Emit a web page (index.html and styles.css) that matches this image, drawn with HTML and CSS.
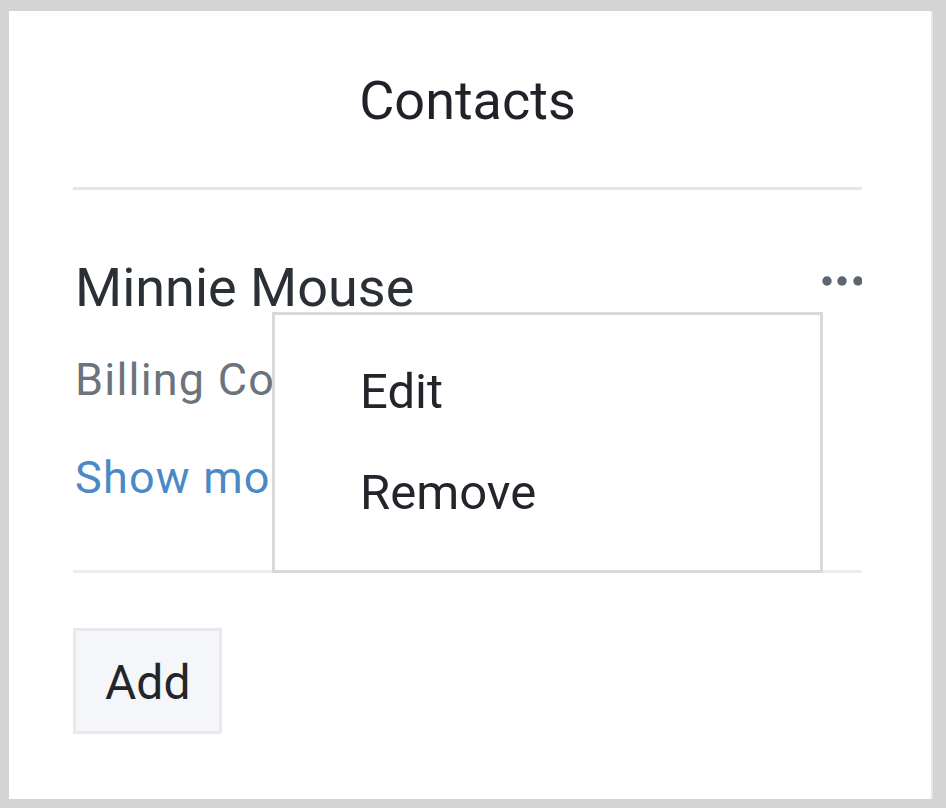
FILE: index.html
```html
<!DOCTYPE html>
<html lang="en">
<head>
<meta charset="utf-8">
<title>Contacts</title>
<link rel="stylesheet" href="styles.css">
</head>
<body>
<div class="frame">
  <div class="panel">
    <h1 class="title">Contacts</h1>
    <div class="list">
      <div class="contact">
        <div class="contact-head">
          <span class="name">Minnie Mouse</span>
          <button class="overflow" aria-label="More options">
            <svg width="41" height="10" viewBox="0 0 41 10"><circle cx="6" cy="5" r="4.7"/><circle cx="21" cy="5" r="4.7"/><circle cx="37" cy="5" r="4.7"/></svg>
          </button>
        </div>
        <div class="role">Billing Contact</div>
        <a class="more" href="#">Show more</a>
        <ul class="menu">
          <li class="menu-item">Edit</li>
          <li class="menu-item">Remove</li>
        </ul>
      </div>
    </div>
    <button class="add">Add</button>
  </div>
</div>
</body>
</html>
```
FILE: styles.css
```css
html, body {
  margin: 0;
  padding: 0;
}
body {
  background: #d4d4d4;
  font-family: Roboto, "Noto Sans", Arial, sans-serif;
  color: #22272d;
}
.frame {
  box-sizing: border-box;
  width: 946px;
  height: 808px;
  padding: 11px 13px 9px 9px;
}
.panel {
  background: #ffffff;
  height: 100%;
  padding: 58px 69px 0 64px;
  box-sizing: border-box;
  border-right: 2px solid #e6e6e6;
}
.title {
  margin: 0;
  font-size: 54px;
  line-height: 64px;
  font-weight: 400;
  text-align: center;
  color: #1f2329;
}
.list {
  margin-top: 54px;
  border-top: 3px solid #e6e6e6;
  border-bottom: 3px solid #ececec;
}
.contact {
  position: relative;
  display: flex;
  flex-direction: column;
  padding: 66px 0 66px 2px;
}
.contact-head {
  display: flex;
  justify-content: space-between;
  align-items: flex-start;
}
.name {
  font-size: 54px;
  line-height: 64px;
  color: #2b3036;
}
.overflow {
  border: 0;
  background: none;
  padding: 0;
  margin-top: 20px;
  display: flex;
  fill: #5c6670;
}
.role {
  margin-top: 34px;
  font-size: 45px;
  line-height: 52px;
  letter-spacing: 1.2px;
  color: #6b737c;
}
.more {
  margin-top: 46px;
  font-size: 45px;
  line-height: 52px;
  letter-spacing: 1.2px;
  color: #4a89c6;
  text-decoration: none;
}
.menu {
  position: absolute;
  left: 199px;
  top: 122px;
  width: 551px;
  height: 261px;
  box-sizing: border-box;
  margin: 0;
  padding: 49px 0 0 85px;
  list-style: none;
  background: #ffffff;
  border: 3px solid #d9d9d9;
  display: flex;
  flex-direction: column;
  gap: 45px;
}
.menu-item {
  font-size: 49px;
  line-height: 56px;
  color: #22262b;
}
.add {
  margin-top: 55px;
  font-family: inherit;
  font-size: 48px;
  line-height: 48px;
  color: #22262b;
  background: #f5f6f9;
  border: 3px solid #e8e9ec;
  padding: 28px 29px 24px;
}
```
